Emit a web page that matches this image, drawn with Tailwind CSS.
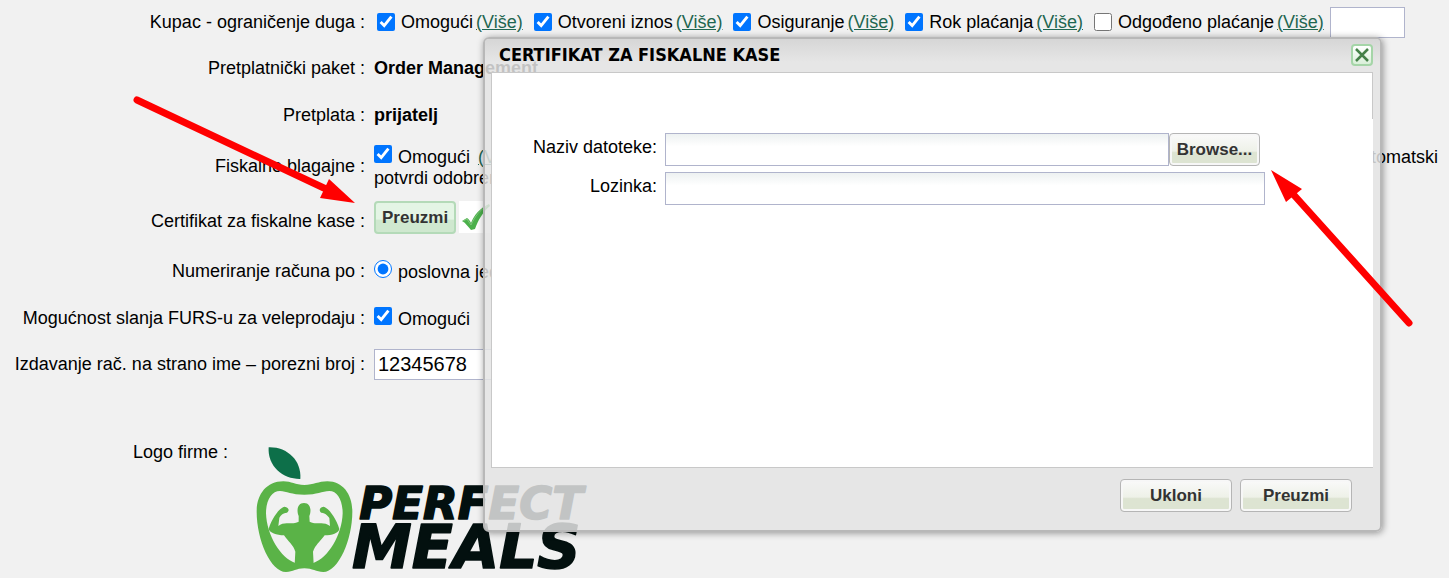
<!DOCTYPE html>
<html lang="hr">
<head>
<meta charset="utf-8">
<meta name="viewport" content="width=device-width, initial-scale=1">
<title>Certifikat za fiskalne kase</title>
<script src="https://cdn.jsdelivr.net/npm/@tailwindcss/browser@4"></script>
</head>
<body class="relative min-h-screen overflow-hidden bg-[#f1f1f1] font-['Liberation_Sans',Arial,sans-serif] text-lg/[21px] text-black">

<main>
  <div class="grid grid-cols-[365px_1fr] items-center gap-x-[9px]">
    <div class="text-right">Kupac - ograničenje duga :</div>
    <div class="flex min-h-[45px] items-center gap-x-[11px] whitespace-nowrap pb-px pl-[3px]">
      <div class="flex items-center gap-[3px]"><label class="flex items-center gap-1.5"><input type="checkbox" checked class="size-[18px]">Omogući</label><a href="#" class="text-[#1f6650] underline">(Više)</a></div>
      <div class="flex items-center gap-[3px]"><label class="flex items-center gap-1.5"><input type="checkbox" checked class="size-[18px]">Otvoreni iznos</label><a href="#" class="text-[#1f6650] underline">(Više)</a></div>
      <div class="flex items-center gap-[3px]"><label class="flex items-center gap-1.5"><input type="checkbox" checked class="size-[18px]">Osiguranje</label><a href="#" class="text-[#1f6650] underline">(Više)</a></div>
      <div class="flex items-center gap-[3px]"><label class="flex items-center gap-1.5"><input type="checkbox" checked class="size-[18px]">Rok plaćanja</label><a href="#" class="text-[#1f6650] underline">(Više)</a></div>
      <div class="flex items-center gap-[3px]"><label class="flex items-center gap-1.5"><input type="checkbox" class="size-[18px]">Odgođeno plaćanje</label><a href="#" class="text-[#1f6650] underline">(Više)</a><input type="text" aria-label="Odgođeno plaćanje, dana" class="ml-[3px] h-[31px] w-[75px] border border-[#b0b4cc] bg-white px-1"></div>
    </div>

    <div class="text-right">Pretplatnički paket :</div>
    <div class="flex min-h-[47px] items-center font-bold">Order Management</div>

    <div class="text-right">Pretplata :</div>
    <div class="flex min-h-[47px] items-center font-bold">prijatelj</div>

    <div class="text-right">Fiskalne blagajne :</div>
    <div class="flex min-h-[55px] flex-col justify-center pr-[11px]">
      <div class="flex items-baseline justify-between">
        <div><label><input type="checkbox" checked class="mr-1.5 size-[18px]">Omogući</label> <a href="#" class="ml-[3px] text-[#1f6650] underline">(Više)</a></div>
        <span>automatski</span>
      </div>
      <div>potvrdi odobrenje</div>
    </div>

    <div class="text-right">Certifikat za fiskalne kase :</div>
    <div class="flex min-h-[54px] items-start gap-[3px] pt-[7px]">
      <button type="button" class="h-[33px] rounded-[4px] border-2 border-[#b4dab8] bg-linear-to-b from-[#e4f5e5] from-55% to-[#cfe8cf] to-60% px-1.5 text-[17px] font-bold text-[#333]">Preuzmi</button>
      <svg class="h-8 w-8 bg-white" viewBox="0 0 32 32" aria-hidden="true"><path d="M3 20 8 17c2 1 3 3 4 5C15 14 21 7 30 3l1 2C24 11 19 19 16 28l-4 1C9 26 7 22 3 20Z" fill="#4bb04b"/><path d="M4 20 8 18l4 6C16 15 21 9 28 5" fill="none" stroke="#7fc77b" stroke-width="1"/></svg>
    </div>

    <div class="text-right">Numeriranje računa po :</div>
    <div class="flex min-h-[47px] items-center"><label><input type="radio" checked class="mr-1.5 size-[18px]">poslovna jedinica</label></div>

    <label for="furs" class="text-right">Mogućnost slanja FURS-u za veleprodaju :</label>
    <div class="flex min-h-[46px] items-center"><label><input id="furs" type="checkbox" checked class="mr-1.5 size-[18px]">Omogući</label></div>

    <label for="tax" class="text-right">Izdavanje rač. na strano ime – porezni broj :</label>
    <div class="flex min-h-[47px] items-center"><input id="tax" type="text" value="12345678" class="h-[31px] w-[240px] border border-[#b0b4cc] bg-white px-[3px] text-xl"></div>
  </div>

  <div class="mt-[54px] flex items-start gap-7">
    <div class="w-[228px] text-right">Logo firme :</div>
    <svg class="mt-[5px] h-[126px] w-[332px] shrink-0 overflow-visible" viewBox="48 51 996 378" role="img" aria-label="Perfect Meals">
      <path d="M86 52C140 50 185 90 181 147 130 148 82 110 86 52Z" fill="#0d6f49"/>
      <path fill="#5ab347" fill-rule="evenodd" d="M130 154C155 154 165 165 193 165S235 154 262 154C310 154 337 195 337 245 337 330 295 425 250 426 228 426 218 415 193 415S160 426 138 426C92 425 50 330 50 245 50 195 78 154 130 154ZM120 183C95 183 78 210 78 250 80 315 122 385 166 399L220 399C264 385 306 315 308 250 308 210 292 183 268 183 245 184 232 194 193 194S140 184 120 183Z"/>
      <path fill="#5ab347" d="M176 258C170 245 170 219 192 219S214 245 208 258L209 275C224 283 234 278 244 280 252 280 262 282 270 288L268 264C262 256 258 250 244 248 236 242 238 232 250 230 262 230 288 262 298 297 296 309 276 316 254 316 240 335 226 345 219 365L221 403 164 403 166 365C160 345 145 335 132 316 110 316 88 308 86 297 96 262 122 230 134 230 146 232 150 242 141 248 126 250 122 256 118 264L115 288C122 282 132 280 140 280 150 278 160 283 176 275Z"/>
      <g fill="#03100f" stroke="#03100f" stroke-width="5" stroke-linejoin="round" font-family="'DejaVu Sans',sans-serif" font-weight="700" font-style="italic">
        <text x="358" y="267" font-size="135">PERFECT</text>
        <text x="336" y="415" font-size="180">MEALS</text>
      </g>
    </svg>
  </div>
</main>

<section role="dialog" aria-labelledby="dialog-title" class="absolute left-[483px] right-[67px] top-[37px] rounded-md border-2 border-[#b8b8b8] bg-[#e4e4e4]/85 shadow-[1px_1px_7px_#00000066]">
  <header class="flex h-[33px] items-center justify-between rounded-t-sm bg-linear-to-b from-[#d6d6d6] to-transparent to-70% pb-0.5 pl-3.5 pr-[7px]">
    <h1 id="dialog-title" class="font-['DejaVu_Sans_Condensed','Noto_Sans',sans-serif] text-lg/[30px] font-bold">CERTIFIKAT ZA FISKALNE KASE</h1>
    <button type="button" aria-label="Zatvori" class="flex size-[22px] items-center justify-center rounded-[4px] border-2 border-[#a5d5a8] bg-linear-to-b from-white to-[#d9efd9]"><svg class="size-4 shrink-0" viewBox="0 0 16 16"><path d="M2 2 14 14M14 2 2 14" stroke="#458048" stroke-width="2.5"/></svg></button>
  </header>
  <form class="relative ml-1.5 mr-[7px] min-h-[396px] border-y border-l border-[#c8c8c8] bg-white pt-[60px]">
    <span class="absolute right-0 top-0 h-[46px] w-px bg-[#c8c8c8]"></span>
    <div class="grid grid-cols-[165px_600px] gap-x-2 gap-y-[6px]">
      <label for="file" class="pt-1 text-right">Naziv datoteke:</label>
      <div class="flex"><input id="file" type="text" class="h-[33px] w-[504px] border border-[#b0b4cc] bg-white bg-linear-to-b from-[#edf1f1] to-white to-40% px-1"><button type="button" class="h-[33px] w-[91px] rounded-[4px] border border-[#b5b5b5] bg-linear-to-b from-[#fafafa] via-[#eef1e8] via-55% to-[#dde4d2] to-60% text-[17px] font-bold text-[#333] shadow-[inset_0_0_0_2px_#f7f7f7]">Browse...</button></div>
      <label for="password" class="pt-1 text-right">Lozinka:</label>
      <input id="password" type="password" class="h-[33px] border border-[#b0b4cc] bg-white bg-linear-to-b from-[#edf1f1] to-white to-40% px-1">
    </div>
  </form>
  <footer class="flex justify-end gap-2 pb-[18px] pr-7 pt-[11px]">
    <button type="button" class="h-[33px] w-28 rounded-[4px] border border-[#b5b5b5] bg-linear-to-b from-[#fafafa] via-[#eef1e8] via-55% to-[#dde4d2] to-60% text-[17px] font-bold text-[#333] shadow-[inset_0_0_0_2px_#f7f7f7]">Ukloni</button>
    <button type="button" class="h-[33px] w-28 rounded-[4px] border border-[#b5b5b5] bg-linear-to-b from-[#fafafa] via-[#eef1e8] via-55% to-[#dde4d2] to-60% text-[17px] font-bold text-[#333] shadow-[inset_0_0_0_2px_#f7f7f7]">Preuzmi</button>
  </footer>
</section>

<!-- Pointer arrows -->
<svg class="pointer-events-none absolute left-0 top-0 h-[578px] w-[1449px]" viewBox="0 0 1449 578" fill="red" stroke-linecap="round" aria-hidden="true">
  <path d="M137 100 326 189M1409 323 1293 194" stroke="red" stroke-width="7"/>
  <path d="M355 203 329 179 320 198ZM1271 170 1302 189 1286 202Z"/>
</svg>
</body>
</html>
